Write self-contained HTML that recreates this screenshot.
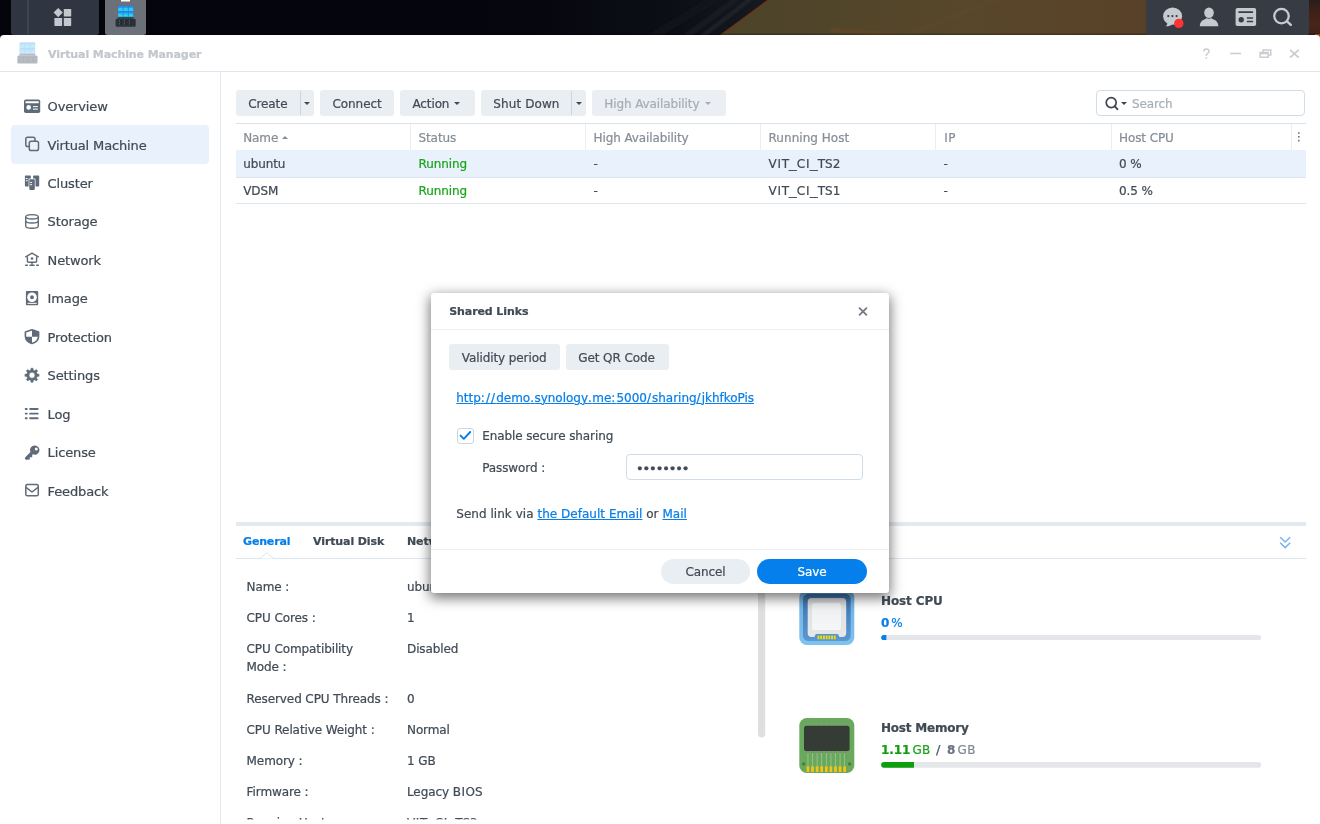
<!DOCTYPE html>
<html lang="en">
<head>
<meta charset="utf-8">
<title>Virtual Machine Manager</title>
<style>
*{box-sizing:border-box;margin:0;padding:0}
html,body{width:1320px;height:824px;overflow:hidden}
body{font-family:"DejaVu Sans","Liberation Sans",sans-serif;font-size:12px;color:#414b55;background:#fff;position:relative;letter-spacing:-0.1px}
#root{position:absolute;left:0;top:0;width:1320px;height:824px;overflow:hidden;will-change:transform}
.a{position:absolute}
.t{position:absolute;white-space:nowrap;line-height:16px;font-size:12px;-webkit-text-stroke:0.22px currentColor}
.b{font-weight:bold}
svg{position:absolute;overflow:visible}
#wall{left:0;top:0;width:1320px;height:40px;background:#080912;overflow:hidden}
#win{left:0;top:35px;width:1320px;height:789px;background:#fff;border-radius:4px 4px 0 0}
.tb{background:#e9eef3;border-radius:3px;height:26px;top:90px}
.tb .t{top:5px;color:#414b55}
.car{width:0;height:0;border-left:3px solid transparent;border-right:3px solid transparent;border-top:3px solid #414b55}
.hl{height:1px;background:#dde5ee}
.vl{width:1px;background:#eaeef3}
.th{color:#868e97}
.grn{color:#1aa51a}
.lnk{color:#057feb;text-decoration:underline;text-underline-offset:0.7px;text-decoration-thickness:1px}
.nav{color:#414b55;font-size:13px;letter-spacing:-0.14px}
.lab{color:#414b55}
.p{letter-spacing:1.1px}
.wi{padding:0 0.7px}
.wu{display:inline-block;width:7.5px;transform:scaleX(1.28);transform-origin:0 50%}
.q{letter-spacing:0.5px}
</style>
</head>
<body>
<div id="root">
<div class="a" id="wall">
<svg width="1320" height="40" viewBox="0 0 1320 40" style="left:0;top:0">
<defs>
<linearGradient id="wg" gradientUnits="userSpaceOnUse" x1="720" y1="0" x2="1320" y2="0">
<stop offset="0" stop-color="#4c4329"/><stop offset="0.2" stop-color="#51452a"/><stop offset="0.4" stop-color="#58472a"/><stop offset="0.6" stop-color="#5a4429"/><stop offset="0.72" stop-color="#574028"/><stop offset="1" stop-color="#4a2e1f"/>
</linearGradient>
<linearGradient id="wd" gradientUnits="userSpaceOnUse" x1="0" y1="0" x2="770" y2="0">
<stop offset="0" stop-color="#04050b"/><stop offset="0.7" stop-color="#06070e"/><stop offset="0.88" stop-color="#0d0f17"/><stop offset="1" stop-color="#171a21"/>
</linearGradient>
<filter id="wb" x="-20%" y="-50%" width="140%" height="200%"><feGaussianBlur stdDeviation="1.2"/></filter>
</defs>
<rect x="0" y="0" width="1320" height="40" fill="url(#wd)"/>
<g filter="url(#wb)" opacity="0.6">
<path d="M752,-2 L700,38" stroke="#2a2e32" stroke-width="4" fill="none"/>
<path d="M738,-2 L684,38" stroke="#1c2026" stroke-width="6" fill="none"/>
<path d="M716,-2 L650,38" stroke="#14171e" stroke-width="8" fill="none"/>
</g>
<polygon points="768,0 1320,0 1320,40 713,40" fill="url(#wg)"/>
<path d="M768.5,-0.5 L713.5,40.5" stroke="#7d2c14" stroke-width="1.1" fill="none" opacity="0.85"/>
<g filter="url(#wb)" opacity="0.5">
<path d="M1000,-2 L900,38" stroke="#5d4a2c" stroke-width="6" fill="none"/>
<path d="M830,30 L900,36" stroke="#6a4a26" stroke-width="5" fill="none"/>
</g>
<linearGradient id="wr" x1="0" y1="0" x2="0" y2="1"><stop offset="0" stop-color="#2a1d1e"/><stop offset="0.3" stop-color="#3e2119"/><stop offset="0.6" stop-color="#4a2419"/><stop offset="0.85" stop-color="#40211a"/><stop offset="1" stop-color="#3a1d15"/></linearGradient><polygon points="1308,0 1320,0 1320,40 1308,40" fill="url(#wr)"/><rect x="1315" y="34" width="5" height="6" fill="#c45a2c"/>
<rect x="0" y="33.5" width="1320" height="2" fill="#000" opacity="0.25"/>
</svg>
</div>
<div class="a" style="left:11px;top:0;width:88px;height:34.5px;background:#2f3641;border-radius:0 0 2.5px 2.5px"></div>
<div class="a" style="left:27px;top:0;width:2px;height:34px;background:#3e4550"></div>
<svg width="20" height="20" viewBox="0 0 20 20" style="left:53px;top:7px">
<rect x="10.8" y="1.9" width="7.4" height="7.6" rx="0.6" fill="#c3c8cf"/>
<rect x="1.4" y="11" width="7.7" height="7.9" rx="0.6" fill="#c3c8cf"/>
<rect x="10.8" y="11" width="7.4" height="7.9" rx="0.6" fill="#c3c8cf"/>
<polygon points="5.2,0.9 9.8,5.6 5.2,10.3 0.6,5.6" fill="#c3c8cf"/>
</svg>
<div class="a" style="left:105px;top:0;width:41.3px;height:34.5px;background:#6c7078;border-radius:0 0 2.5px 2.5px"></div>
<div class="a" style="left:121px;top:0;width:9px;height:1px;background:#fff"></div><div class="a" style="left:121px;top:1px;width:9px;height:1px;background:rgba(255,255,255,0.5)"></div>
<svg width="21" height="21" viewBox="0 0 21 21" style="left:115px;top:5px"><g transform="translate(0.4,0.9)">
<defs><linearGradient id="vgn" x1="0" y1="0" x2="0" y2="1"><stop offset="0" stop-color="#2385f2"/><stop offset="1" stop-color="#16d8ea"/></linearGradient></defs>
<rect x="2.5" y="0" width="15.4" height="11.2" fill="#2b66cf"/>
<rect x="2.60" y="0.00" width="4.9" height="5.3" fill="url(#vgn)"/><rect x="3.20" y="2.20" width="3.7" height="0.7" fill="#7fe9f5" opacity="0.55"/><rect x="3.20" y="3.70" width="3.7" height="0.7" fill="#7fe9f5" opacity="0.55"/><rect x="7.80" y="0.00" width="4.9" height="5.3" fill="url(#vgn)"/><rect x="8.40" y="2.20" width="3.7" height="0.7" fill="#7fe9f5" opacity="0.55"/><rect x="8.40" y="3.70" width="3.7" height="0.7" fill="#7fe9f5" opacity="0.55"/><rect x="13.00" y="0.00" width="4.9" height="5.3" fill="url(#vgn)"/><rect x="13.60" y="2.20" width="3.7" height="0.7" fill="#7fe9f5" opacity="0.55"/><rect x="13.60" y="3.70" width="3.7" height="0.7" fill="#7fe9f5" opacity="0.55"/><rect x="2.60" y="5.60" width="4.9" height="5.3" fill="url(#vgn)"/><rect x="3.20" y="7.80" width="3.7" height="0.7" fill="#7fe9f5" opacity="0.55"/><rect x="3.20" y="9.30" width="3.7" height="0.7" fill="#7fe9f5" opacity="0.55"/><rect x="7.80" y="5.60" width="4.9" height="5.3" fill="url(#vgn)"/><rect x="8.40" y="7.80" width="3.7" height="0.7" fill="#7fe9f5" opacity="0.55"/><rect x="8.40" y="9.30" width="3.7" height="0.7" fill="#7fe9f5" opacity="0.55"/><rect x="13.00" y="5.60" width="4.9" height="5.3" fill="url(#vgn)"/><rect x="13.60" y="7.80" width="3.7" height="0.7" fill="#7fe9f5" opacity="0.55"/><rect x="13.60" y="9.30" width="3.7" height="0.7" fill="#7fe9f5" opacity="0.55"/>
<rect x="2.3" y="11.1" width="15.8" height="1.9" fill="#3b404d"/>
<path d="M1.2,12.8 H19.2 L20.3,13.6 V19.8 Q20.3,20.8 19.3,20.8 H1.2 Q0.2,20.8 0.2,19.8 V13.6 Z" fill="#2a2f3b"/>
<rect x="2.90" y="14.00" width="4.4" height="2.2" rx="0.5" fill="#1c2029" stroke="#474d5a" stroke-width="0.4"/><rect x="3.60" y="14.60" width="0.9" height="0.9" fill="#55cf3c" opacity="0.85"/><rect x="7.90" y="14.00" width="4.4" height="2.2" rx="0.5" fill="#1c2029" stroke="#474d5a" stroke-width="0.4"/><rect x="8.60" y="14.60" width="0.9" height="0.9" fill="#55cf3c" opacity="0.85"/><rect x="12.90" y="14.00" width="4.4" height="2.2" rx="0.5" fill="#1c2029" stroke="#474d5a" stroke-width="0.4"/><rect x="13.60" y="14.60" width="0.9" height="0.9" fill="#55cf3c" opacity="0.85"/><rect x="2.90" y="16.90" width="4.4" height="2.2" rx="0.5" fill="#1c2029" stroke="#474d5a" stroke-width="0.4"/><rect x="3.60" y="17.50" width="0.9" height="0.9" fill="#55cf3c" opacity="0.85"/><rect x="7.90" y="16.90" width="4.4" height="2.2" rx="0.5" fill="#1c2029" stroke="#474d5a" stroke-width="0.4"/><rect x="8.60" y="17.50" width="0.9" height="0.9" fill="#55cf3c" opacity="0.85"/><rect x="12.90" y="16.90" width="4.4" height="2.2" rx="0.5" fill="#1c2029" stroke="#474d5a" stroke-width="0.4"/><rect x="13.60" y="17.50" width="0.9" height="0.9" fill="#55cf3c" opacity="0.85"/>
</g></svg>
<div class="a" style="left:1146px;top:0;width:163px;height:34.5px;background:#373c44;border-radius:0 0 2.5px 2.5px"></div>
<svg width="24" height="22" viewBox="0 0 24 22" style="left:1162px;top:6px">
<ellipse cx="10.6" cy="10.2" rx="9.5" ry="8.6" fill="#c5cad0"/>
<path d="M5.2,15.5 C5.6,17.8 5.0,19.4 3.6,20.3 C6.4,20.6 8.6,19.8 10,18.2 Z" fill="#c5cad0"/>
<circle cx="6.3" cy="10.1" r="1.15" fill="#383d46"/><circle cx="10.4" cy="10.1" r="1.15" fill="#383d46"/><circle cx="14.6" cy="10.1" r="1.15" fill="#383d46"/>
<circle cx="16.8" cy="17.4" r="4.7" fill="#ff3333"/>
</svg>
<svg width="20" height="20" viewBox="0 0 20 20" style="left:1199px;top:7px">
<ellipse cx="10" cy="5.8" rx="4.8" ry="5.3" fill="#c5cad0"/>
<path d="M0.8,19.2 C0.8,16 2,13.6 5.4,12.4 C6.6,11.9 7.4,11.6 7.6,11 C8.6,12 11.4,12 12.4,11 C12.6,11.6 13.4,11.9 14.6,12.4 C18,13.6 19.3,16 19.3,19.2 Z" fill="#c5cad0"/>
</svg>
<svg width="22" height="20" viewBox="0 0 22 20" style="left:1235px;top:7px">
<rect x="0.6" y="0.9" width="20.5" height="18.2" rx="1.8" fill="#c5cad0"/>
<rect x="3.3" y="4.2" width="14.8" height="1.8" rx="0.5" fill="#383d46"/>
<circle cx="6.2" cy="12.7" r="2.7" fill="#383d46"/>
<rect x="11.8" y="10.2" width="6.3" height="1.5" rx="0.5" fill="#383d46"/>
<rect x="11.8" y="13.8" width="6.3" height="1.5" rx="0.5" fill="#383d46"/>
</svg>
<svg width="22" height="22" viewBox="0 0 22 22" style="left:1272px;top:6px">
<circle cx="9.5" cy="10.1" r="7.25" fill="none" stroke="#c5cad0" stroke-width="2.3"/>
<path d="M15,15.4 L18.8,18.9" stroke="#c5cad0" stroke-width="2.5" stroke-linecap="round"/>
</svg>
<div class="a" id="win"></div>
<svg width="21" height="21" viewBox="0 0 21 21" style="left:17px;top:42px"><g transform="translate(0.2,0.6)">
<defs><linearGradient id="vgf" x1="0" y1="0" x2="0" y2="1"><stop offset="0" stop-color="#bcdcfb"/><stop offset="1" stop-color="#bdf0f7"/></linearGradient></defs>
<rect x="2.5" y="0" width="15.4" height="11.2" fill="#c3d3f6"/>
<rect x="2.60" y="0.00" width="4.9" height="5.3" fill="url(#vgf)"/><rect x="3.20" y="2.20" width="3.7" height="0.7" fill="#dff3fd" opacity="0.55"/><rect x="3.20" y="3.70" width="3.7" height="0.7" fill="#dff3fd" opacity="0.55"/><rect x="7.80" y="0.00" width="4.9" height="5.3" fill="url(#vgf)"/><rect x="8.40" y="2.20" width="3.7" height="0.7" fill="#dff3fd" opacity="0.55"/><rect x="8.40" y="3.70" width="3.7" height="0.7" fill="#dff3fd" opacity="0.55"/><rect x="13.00" y="0.00" width="4.9" height="5.3" fill="url(#vgf)"/><rect x="13.60" y="2.20" width="3.7" height="0.7" fill="#dff3fd" opacity="0.55"/><rect x="13.60" y="3.70" width="3.7" height="0.7" fill="#dff3fd" opacity="0.55"/><rect x="2.60" y="5.60" width="4.9" height="5.3" fill="url(#vgf)"/><rect x="3.20" y="7.80" width="3.7" height="0.7" fill="#dff3fd" opacity="0.55"/><rect x="3.20" y="9.30" width="3.7" height="0.7" fill="#dff3fd" opacity="0.55"/><rect x="7.80" y="5.60" width="4.9" height="5.3" fill="url(#vgf)"/><rect x="8.40" y="7.80" width="3.7" height="0.7" fill="#dff3fd" opacity="0.55"/><rect x="8.40" y="9.30" width="3.7" height="0.7" fill="#dff3fd" opacity="0.55"/><rect x="13.00" y="5.60" width="4.9" height="5.3" fill="url(#vgf)"/><rect x="13.60" y="7.80" width="3.7" height="0.7" fill="#dff3fd" opacity="0.55"/><rect x="13.60" y="9.30" width="3.7" height="0.7" fill="#dff3fd" opacity="0.55"/>
<rect x="2.3" y="11.1" width="15.8" height="1.9" fill="#b9bcc4"/>
<path d="M1.2,12.8 H19.2 L20.3,13.6 V19.8 Q20.3,20.8 19.3,20.8 H1.2 Q0.2,20.8 0.2,19.8 V13.6 Z" fill="#b4b8c0"/>
<rect x="2.90" y="14.00" width="4.4" height="2.2" rx="0.5" fill="#adb1b9" stroke="#c3c6cc" stroke-width="0.4"/><rect x="3.60" y="14.60" width="0.9" height="0.9" fill="#b7e6a3" opacity="0.85"/><rect x="7.90" y="14.00" width="4.4" height="2.2" rx="0.5" fill="#adb1b9" stroke="#c3c6cc" stroke-width="0.4"/><rect x="8.60" y="14.60" width="0.9" height="0.9" fill="#b7e6a3" opacity="0.85"/><rect x="12.90" y="14.00" width="4.4" height="2.2" rx="0.5" fill="#adb1b9" stroke="#c3c6cc" stroke-width="0.4"/><rect x="13.60" y="14.60" width="0.9" height="0.9" fill="#b7e6a3" opacity="0.85"/><rect x="2.90" y="16.90" width="4.4" height="2.2" rx="0.5" fill="#adb1b9" stroke="#c3c6cc" stroke-width="0.4"/><rect x="3.60" y="17.50" width="0.9" height="0.9" fill="#b7e6a3" opacity="0.85"/><rect x="7.90" y="16.90" width="4.4" height="2.2" rx="0.5" fill="#adb1b9" stroke="#c3c6cc" stroke-width="0.4"/><rect x="8.60" y="17.50" width="0.9" height="0.9" fill="#b7e6a3" opacity="0.85"/><rect x="12.90" y="16.90" width="4.4" height="2.2" rx="0.5" fill="#adb1b9" stroke="#c3c6cc" stroke-width="0.4"/><rect x="13.60" y="17.50" width="0.9" height="0.9" fill="#b7e6a3" opacity="0.85"/>
</g></svg>
<div class="t b" style="left:48px;top:47px;line-height:15px;font-size:11px;color:#c3c7cc;letter-spacing:-0.1px">Virtual Machine Manager</div>
<div class="a hl" style="left:0;top:71px;width:1320px;background:#dfe6ee"></div>
<svg width="100" height="14" viewBox="0 0 100 14" style="left:1200px;top:47px">
<g fill="none" stroke="#c9cdd1" stroke-width="1.5">
<path d="M3.7,4.6 C3.7,2.8 4.9,1.9 6.4,1.9 C8,1.9 9.0,2.9 9.0,4.2 C9.0,5.4 8.3,6 7.4,6.7 C6.6,7.3 6.3,7.8 6.3,9"/>
<path d="M30.2,6.5 H41" stroke-width="1.6"/>
<path d="M60.2,5.6 H68.2 V10.3 H60.2 Z"/>
<path d="M60.2,6.4 H68.2" stroke-width="1.8"/>
<path d="M63,5 V3 H70.8 V7.9 H68.8"/>
<path d="M90.1,2.9 L98.7,10.6 M98.7,2.9 L90.1,10.6" stroke-width="1.8"/>
</g>
<rect x="5.5" y="10.3" width="1.6" height="1.6" fill="#c9cdd1"/>
</svg>
<div class="a vl" style="left:220px;top:72px;height:752px;background:#e2e7ef"></div>
<div class="a" style="left:11px;top:125px;width:198px;height:38.5px;border-radius:4px;background:#e9f1fd"></div>
<svg width="16" height="16" viewBox="0 0 16 16" style="left:24px;top:98px"><g transform="translate(0.0,0.1)"><rect x="0" y="1.3" width="16.2" height="13.6" rx="1.8" fill="#5f6b78"/>
<rect x="1.5" y="3.2" width="13.2" height="1.9" rx="0.3" fill="#fff"/>
<circle cx="4.7" cy="9.3" r="2.3" fill="#fff"/>
<rect x="9" y="8" width="4.8" height="1" fill="#fff"/>
<rect x="9" y="10.3" width="4.8" height="1.5" fill="#d0d4d9"/></g></svg>
<div class="t nav" style="left:47.6px;top:98px;line-height:17px;font-size:13px;">Overview</div>
<svg width="16" height="16" viewBox="0 0 16 16" style="left:24px;top:136px"><g transform="translate(0.0,0.55)"><rect x="1.8" y="0.8" width="9.2" height="9.2" rx="1.8" fill="none" stroke="#5f6b78" stroke-width="1.5"/>
<rect x="5.3" y="4.6" width="9.2" height="9.4" rx="1.8" fill="#e9f1fd" stroke="#5f6b78" stroke-width="1.5"/></g></svg>
<div class="t nav" style="left:47.6px;top:137px;line-height:17px;font-size:13px;">Virtual Machine</div>
<svg width="16" height="16" viewBox="0 0 16 16" style="left:24px;top:175px"><rect x="0.9" y="0.6" width="5.9" height="10.9" rx="0.8" fill="#5f6b78"/>
<rect x="9.1" y="0.6" width="6.1" height="10.9" rx="0.8" fill="#5f6b78"/>
<rect x="4.6" y="3.5" width="6.9" height="12" rx="1.2" fill="#fff"/>
<rect x="5.3" y="4.2" width="5.5" height="10.7" rx="0.8" fill="#5f6b78"/>
<rect x="1.8" y="3" width="1.8" height="1" fill="#fff"/><rect x="1.8" y="5.2" width="1.8" height="1" fill="#fff"/>
<rect x="6.2" y="7" width="1.9" height="1" fill="#fff"/><rect x="6.2" y="9.2" width="1.9" height="1" fill="#fff"/></svg>
<div class="t nav" style="left:47.6px;top:175px;line-height:17px;font-size:13px;">Cluster</div>
<svg width="16" height="16" viewBox="0 0 16 16" style="left:24px;top:213px"><g transform="translate(0.0,0.45)"><g fill="none" stroke="#5f6b78" stroke-width="1.4">
<ellipse cx="8" cy="3.4" rx="6.3" ry="2.2"/>
<path d="M1.7,3.4 V12.6 C1.7,13.9 4.5,14.8 8,14.8 C11.5,14.8 14.3,13.9 14.3,12.6 V3.4"/>
<path d="M1.7,7.6 C1.7,8.8 4.5,9.6 8,9.6 C11.5,9.6 14.3,8.8 14.3,7.6"/>
</g></g></svg>
<div class="t nav" style="left:47.6px;top:213px;line-height:17px;font-size:13px;">Storage</div>
<svg width="16" height="16" viewBox="0 0 16 16" style="left:24px;top:251px"><g transform="translate(0.0,0.9)"><g fill="none" stroke="#5f6b78" stroke-width="1.4" stroke-linejoin="round">
<path d="M1.2,5.3 L8,1.2 L14.8,5.3"/>
<path d="M3.4,4.6 V9.4 Q3.4,10.4 4.4,10.4 H11.6 Q12.6,10.4 12.6,9.4 V4.6"/>
</g>
<circle cx="8" cy="6.6" r="1.3" fill="#5f6b78"/>
<rect x="7.3" y="10.4" width="1.4" height="2.6" fill="#5f6b78"/>
<rect x="5.4" y="12.6" width="5.3" height="1.6" rx="0.6" fill="#5f6b78"/>
<rect x="1" y="12.7" width="3" height="1.3" rx="0.4" fill="#5f6b78"/>
<rect x="12" y="12.7" width="3" height="1.3" rx="0.4" fill="#5f6b78"/></g></svg>
<div class="t nav" style="left:47.6px;top:252px;line-height:17px;font-size:13px;">Network</div>
<svg width="16" height="16" viewBox="0 0 16 16" style="left:24px;top:290px"><g transform="translate(0.0,0.35)"><rect x="1.9" y="0.6" width="12.3" height="14.4" rx="1" fill="#5f6b78"/>
<circle cx="8" cy="6.9" r="4.8" fill="#fff"/>
<circle cx="8" cy="6.9" r="1.9" fill="#5f6b78"/>
<rect x="3.5" y="12.5" width="9.2" height="1" fill="#fff"/></g></svg>
<div class="t nav" style="left:47.6px;top:290px;line-height:17px;font-size:13px;">Image</div>
<svg width="16" height="16" viewBox="0 0 16 16" style="left:24px;top:328px"><g transform="translate(0.0,0.8)"><path d="M8,1 L14.6,3.2 V7.2 C14.6,11 11.6,13.7 8,14.8 C4.4,13.7 1.4,11 1.4,7.2 V3.2 Z" fill="#fff" stroke="#5f6b78" stroke-width="1.6" stroke-linejoin="round"/>
<path d="M8,1 L14.6,3.2 V7.9 H8 Z" fill="#5f6b78"/>
<path d="M8,7.9 V14.8 C4.4,13.7 1.6,11 1.4,7.9 Z" fill="#5f6b78"/></g></svg>
<div class="t nav" style="left:47.6px;top:329px;line-height:17px;font-size:13px;">Protection</div>
<svg width="16" height="16" viewBox="0 0 16 16" style="left:24px;top:367px"><g transform="translate(0.0,0.25)"><path d="M6.84,2.83 L6.93,0.93 L9.07,0.93 L9.16,2.83 L10.84,3.52 L12.24,2.25 L13.75,3.76 L12.48,5.16 L13.17,6.84 L15.07,6.93 L15.07,9.07 L13.17,9.16 L12.48,10.84 L13.75,12.24 L12.24,13.75 L10.84,12.48 L9.16,13.17 L9.07,15.07 L6.93,15.07 L6.84,13.17 L5.16,12.48 L3.76,13.75 L2.25,12.24 L3.52,10.84 L2.83,9.16 L0.93,9.07 L0.93,6.93 L2.83,6.84 L3.52,5.16 L2.25,3.76 L3.76,2.25 L5.16,3.52 Z M10.95,8.00 A2.95,2.95 0 1,0 5.05,8.00 A2.95,2.95 0 1,0 10.95,8.00 Z" fill="#5f6b78" fill-rule="evenodd" stroke="#5f6b78" stroke-width="0.5" stroke-linejoin="round"/></g></svg>
<div class="t nav" style="left:47.6px;top:367px;line-height:17px;font-size:13px;">Settings</div>
<svg width="16" height="16" viewBox="0 0 16 16" style="left:24px;top:405px"><g transform="translate(0.0,0.7)"><g fill="#5f6b78">
<rect x="0.8" y="2.35" width="2.8" height="1.9" rx="0.7"/><rect x="5.2" y="2.35" width="9.4" height="1.9" rx="0.9"/>
<rect x="0.8" y="6.95" width="2.8" height="1.9" rx="0.7"/><rect x="5.2" y="6.95" width="9.4" height="1.9" rx="0.9"/>
<rect x="0.8" y="11.55" width="2.8" height="1.9" rx="0.7"/><rect x="5.2" y="11.55" width="9.4" height="1.9" rx="0.9"/>
</g></g></svg>
<div class="t nav" style="left:47.6px;top:406px;line-height:17px;font-size:13px;">Log</div>
<svg width="16" height="16" viewBox="0 0 16 16" style="left:24px;top:444px"><g transform="translate(0.0,0.15)"><path transform="translate(0,0.9)" d="M10.9,0.4 A4.6,4.6 0 1,1 9.0,9.2 L8.2,10 L8.2,12.2 L5.8,12.2 L5.8,14.4 L2.4,14.8 Q0.9,14.8 0.9,13.4 Q0.9,12.5 1.5,11.9 L6.5,7.0 A4.6,4.6 0 0,1 10.9,0.4 Z M12.3,2.4 A1.5,1.5 0 1,0 12.3,5.4 A1.5,1.5 0 1,0 12.3,2.4 Z" fill="#5f6b78" fill-rule="evenodd"/></g></svg>
<div class="t nav" style="left:47.6px;top:444px;line-height:17px;font-size:13px;">License</div>
<svg width="16" height="16" viewBox="0 0 16 16" style="left:24px;top:482px"><g transform="translate(0.0,0.6)"><g fill="none" stroke="#5f6b78" stroke-width="1.5" stroke-linejoin="round">
<rect x="1.8" y="2" width="12.5" height="11.2" rx="1.6"/>
<path d="M2,4.8 L8,9.4 L14,4.8"/>
</g></g></svg>
<div class="t nav" style="left:47.6px;top:483px;line-height:17px;font-size:13px;">Feedback</div>
<div class="a tb" style="left:236px;width:78px;background:#e9eef3"><div class="t" style="left:12.199999999999989px;top:6px;color:#414b55">Create</div><div class="a" style="left:64px;top:1px;width:1px;height:24px;background:#cdd4dc"></div><div class="a car" style="left:68px;top:11.5px;border-top-color:#414b55"></div></div>
<div class="a tb" style="left:320px;width:74px;background:#e9eef3"><div class="t" style="left:12.600000000000023px;top:6px;color:#414b55">Connect</div></div>
<div class="a tb" style="left:400px;width:75px;background:#e9eef3"><div class="t" style="left:12.399999999999977px;top:6px;color:#414b55">Action</div><div class="a car" style="left:54px;top:11.5px;border-top-color:#414b55"></div></div>
<div class="a tb" style="left:481px;width:105px;background:#e9eef3"><div class="t" style="left:12.300000000000011px;top:6px;color:#414b55"><span style="letter-spacing:0.1px">Shut Down</span></div><div class="a" style="left:90px;top:1px;width:1px;height:24px;background:#cdd4dc"></div><div class="a car" style="left:94.70000000000005px;top:11.5px;border-top-color:#414b55"></div></div>
<div class="a tb" style="left:592px;width:134px;background:#ebeff3"><div class="t" style="left:12.299999999999955px;top:6px;color:#a6adb5">High Availability</div><div class="a car" style="left:112.5px;top:11.5px;border-top-color:#a6adb5"></div></div>
<div class="a" style="left:1096px;top:90px;width:209px;height:26px;border:1px solid #cfdcea;border-radius:4px;background:#fff"></div>
<svg width="16" height="16" viewBox="0 0 16 16" style="left:1104px;top:95px">
<circle cx="7.2" cy="7.6" r="5" fill="none" stroke="#3d4650" stroke-width="1.7"/>
<path d="M10.8,11.3 L13.4,14.2" stroke="#3d4650" stroke-width="1.9" stroke-linecap="round"/>
</svg>
<div class="a car" style="left:1121px;top:101.5px;border-top-color:#3d4650"></div>
<div class="t " style="left:1132px;top:96px;line-height:16px;color:#a7aeb6">Search</div>
<div class="a hl" style="left:236px;top:123px;width:1070px;background:#d9e3ee"></div>
<div class="a" style="left:236px;top:150px;width:1070px;height:27px;background:#e9f1fc"></div>
<div class="a hl" style="left:236px;top:176.5px;width:1070px;background:#dbe4ef"></div>
<div class="a hl" style="left:236px;top:203px;width:1070px;background:#dfe6ee"></div>
<div class="t th" style="left:243.2px;top:130px;line-height:16px;">Name</div>
<div class="t th" style="left:418.5px;top:130px;line-height:16px;">Status</div>
<div class="a vl" style="left:410px;top:124px;height:26px"></div>
<div class="t th" style="left:593.5px;top:130px;line-height:16px;">High Availability</div>
<div class="a vl" style="left:585px;top:124px;height:26px"></div>
<div class="t th" style="left:768.5px;top:130px;line-height:16px;letter-spacing:0.04px">Running Host</div>
<div class="a vl" style="left:760px;top:124px;height:26px"></div>
<div class="t th" style="left:943.5px;top:130px;line-height:16px;"><span class="wi">I</span>P</div>
<div class="a vl" style="left:935px;top:124px;height:26px"></div>
<div class="t th" style="left:1119.0px;top:130px;line-height:16px;">Host CPU</div>
<div class="a vl" style="left:1111px;top:124px;height:26px"></div>
<div class="a vl" style="left:1291px;top:124px;height:26px"></div>
<div class="a" style="left:282px;top:135.5px;width:0;height:0;border-left:3px solid transparent;border-right:3px solid transparent;border-bottom:3px solid #868e97"></div>
<svg width="4" height="12" viewBox="0 0 4 12" style="left:1297px;top:131px"><g fill="#6b7580"><rect x="1" y="1.2" width="1.6" height="1.6"/><rect x="1" y="5" width="1.6" height="1.6"/><rect x="1" y="8.8" width="1.6" height="1.6"/></g></svg>
<div class="t lab" style="left:243.2px;top:156px;line-height:16px;">ubuntu</div>
<div class="t grn" style="left:418.5px;top:156px;line-height:16px;">Running</div>
<div class="t lab" style="left:593.5px;top:156px;line-height:16px;">-</div>
<div class="t lab" style="left:768.5px;top:156px;line-height:16px;letter-spacing:0.08px">V<span class="wi">I</span>T<span class="wu">_</span>C<span class="wi">I</span><span class="wu">_</span>TS2</div>
<div class="t lab" style="left:943.5px;top:156px;line-height:16px;">-</div>
<div class="t lab" style="left:1119.0px;top:156px;line-height:16px;">0 %</div>
<div class="t lab" style="left:243.2px;top:183px;line-height:16px;">VDSM</div>
<div class="t grn" style="left:418.5px;top:183px;line-height:16px;">Running</div>
<div class="t lab" style="left:593.5px;top:183px;line-height:16px;">-</div>
<div class="t lab" style="left:768.5px;top:183px;line-height:16px;letter-spacing:0.08px">V<span class="wi">I</span>T<span class="wu">_</span>C<span class="wi">I</span><span class="wu">_</span>TS1</div>
<div class="t lab" style="left:943.5px;top:183px;line-height:16px;">-</div>
<div class="t lab" style="left:1119.0px;top:183px;line-height:16px;">0.5 %</div>
<div class="a" style="left:236px;top:522px;width:1070px;height:4px;background:linear-gradient(#e6ebf2,#e0e7ef 70%,#e6ebf2)"></div>
<div class="a hl" style="left:236px;top:558px;width:1070px;background:#dde5ee"></div>
<svg width="14" height="7" viewBox="0 0 14 7" style="left:259px;top:552px"><g transform="translate(0.7,0.0)"><path d="M0,6.5 L7,0.5 L14,6.5 Z" fill="#fff"/><path d="M0,6.5 L7,0.8 L14,6.5" fill="none" stroke="#dde5ee" stroke-width="1"/></g></svg>
<div class="t b" style="left:243px;top:534px;line-height:15px;font-size:11px;color:#057feb;letter-spacing:-0.15px">General</div>
<div class="t b" style="left:313px;top:534px;line-height:15px;font-size:11px;letter-spacing:-0.1px">Virtual Disk</div>
<div class="t b" style="left:407px;top:534px;line-height:15px;font-size:11px;letter-spacing:-0.1px">Network</div>
<svg width="14" height="14" viewBox="0 0 14 14" style="left:1278px;top:535px"><g fill="none" stroke="#79b1f2" stroke-width="1.5" stroke-linejoin="miter"><path d="M2.2,2.2 L7.2,7 L12.2,2.2"/><path d="M2.2,7.8 L7.2,12.6 L12.2,7.8"/></g></svg>
<div class="t lab" style="left:246.6px;top:579px;line-height:16px;">Name :</div>
<div class="t lab" style="left:407px;top:579px;line-height:16px;">ubuntu</div>
<div class="t lab" style="left:246.6px;top:610px;line-height:16px;">CPU Cores :</div>
<div class="t lab" style="left:407px;top:610px;line-height:16px;">1</div>
<div class="t lab" style="left:246.6px;top:641px;line-height:16px;">CPU Compatibility</div>
<div class="t lab" style="left:407px;top:641px;line-height:16px;">Disabled</div>
<div class="t lab" style="left:246.6px;top:659px;line-height:16px;">Mode :</div>
<div class="t lab" style="left:246.6px;top:691px;line-height:16px;">Reserved CPU Threads :</div>
<div class="t lab" style="left:407px;top:691px;line-height:16px;">0</div>
<div class="t lab" style="left:246.6px;top:722px;line-height:16px;">CPU Relative Weight :</div>
<div class="t lab" style="left:407px;top:722px;line-height:16px;">Normal</div>
<div class="t lab" style="left:246.6px;top:753px;line-height:16px;">Memory :</div>
<div class="t lab" style="left:407px;top:753px;line-height:16px;">1 GB</div>
<div class="t lab" style="left:246.6px;top:784px;line-height:16px;">Firmware :</div>
<div class="t lab" style="left:407px;top:784px;line-height:16px;">Legacy B<span class="wi">I</span>OS</div>
<div class="t lab" style="left:246.6px;top:815px;line-height:16px;">Running Host :</div>
<div class="t lab" style="left:407px;top:815px;line-height:16px;">V<span class="wi">I</span>T<span class="wu">_</span>C<span class="wi">I</span><span class="wu">_</span>TS2</div>
<div class="a" style="left:236px;top:819px;width:521px;height:1px;background:rgba(255,255,255,0.5)"></div><div class="a" style="left:236px;top:820px;width:521px;height:4px;background:#fff"></div>
<svg width="8" height="172" viewBox="0 0 8 172" style="left:758px;top:566px"><rect x="0" y="0" width="7.2" height="171.4" rx="3.6" fill="#dfdfdf"/></svg>
<svg width="55" height="55" viewBox="0 0 55 55" style="left:799px;top:590px"><g transform="translate(0.3,0.0)">
<defs><linearGradient id="cg" x1="0" y1="0" x2="0" y2="1"><stop offset="0" stop-color="#6fb0e2"/><stop offset="1" stop-color="#7ec2ef"/></linearGradient>
<linearGradient id="cg2" x1="0" y1="0" x2="0" y2="1"><stop offset="0" stop-color="#3d6ea6"/><stop offset="0.5" stop-color="#4d86c0"/><stop offset="1" stop-color="#5a98d2"/></linearGradient>
<linearGradient id="cg3" x1="0" y1="0" x2="0" y2="1"><stop offset="0" stop-color="#d0d1d3"/><stop offset="0.3" stop-color="#e2e3e5"/><stop offset="1" stop-color="#e6e7e9"/></linearGradient>
<linearGradient id="cg4" x1="0" y1="0" x2="0" y2="1"><stop offset="0" stop-color="#eeeff1"/><stop offset="1" stop-color="#f6f7f8"/></linearGradient></defs>
<rect x="0" y="0" width="55" height="55" rx="7.5" fill="url(#cg)"/>
<rect x="3.7" y="3.8" width="47.7" height="47.3" rx="5.5" fill="url(#cg2)"/>
<path d="M12.4,8 H42.9 Q46.9,8 46.9,12 V43 Q46.9,46.9 43,46.9 H40.6 Q39.4,46.9 39.4,45.6 Q39.4,44.1 38,44.1 H17.2 Q15.8,44.1 15.8,45.6 Q15.8,46.9 14.6,46.9 H12.4 Q8.4,46.9 8.4,43 V12 Q8.4,8 12.4,8 Z" fill="url(#cg3)"/>
<rect x="12.3" y="12.8" width="29.8" height="28.2" rx="3.6" fill="#d4d5d7"/>
<rect x="12.5" y="13" width="29.4" height="27.6" rx="3.4" fill="url(#cg4)"/>
<rect x="18.20" y="45.4" width="1.9" height="3.9" rx="0.3" fill="#f6dc05"/><rect x="20.92" y="45.4" width="1.9" height="3.9" rx="0.3" fill="#f6dc05"/><rect x="23.64" y="45.4" width="1.9" height="3.9" rx="0.3" fill="#f6dc05"/><rect x="26.36" y="45.4" width="1.9" height="3.9" rx="0.3" fill="#f6dc05"/><rect x="29.08" y="45.4" width="1.9" height="3.9" rx="0.3" fill="#f6dc05"/><rect x="31.80" y="45.4" width="1.9" height="3.9" rx="0.3" fill="#f6dc05"/><rect x="34.52" y="45.4" width="1.9" height="3.9" rx="0.3" fill="#f6dc05"/>
</g></svg>
<div class="t b" style="left:881px;top:593px;line-height:16px;letter-spacing:-0.12px">Host CPU</div>
<div class="t " style="left:881px;top:615px;line-height:16px;color:#057feb"><span class="b">0</span><span style="margin-left:2px">%</span></div>
<svg width="381" height="6" viewBox="0 0 381 6" style="left:881px;top:634px"><g transform="translate(0.0,0.9)"><rect x="0.2" y="0" width="380" height="5.2" rx="2.6" fill="#e4e6e9"/><path d="M2.8,0 H5.4 V5.2 H2.8 A2.6,2.6 0 0,1 2.8,0 Z" fill="#057feb"/></g></svg>
<svg width="55" height="55" viewBox="0 0 55 55" style="left:799px;top:718px"><g transform="translate(0.3,0.0)">
<rect x="0" y="0" width="55" height="55" rx="7.5" fill="#6aa85e"/>
<rect x="7.30" y="48.2" width="2.7" height="5.8" rx="0.3" fill="#f7c414"/><rect x="8.30" y="34" width="0.7" height="14.2" fill="#a5cc98"/><rect x="7.80" y="32.6" width="1.7" height="2.3" rx="0.5" fill="#7d857d"/><rect x="7.80" y="5.2" width="1.7" height="3" rx="0.6" fill="#8c988a"/><rect x="11.89" y="48.2" width="2.7" height="5.8" rx="0.3" fill="#f7c414"/><rect x="12.89" y="34" width="0.7" height="14.2" fill="#a5cc98"/><rect x="12.39" y="32.6" width="1.7" height="2.3" rx="0.5" fill="#7d857d"/><rect x="12.39" y="5.2" width="1.7" height="3" rx="0.6" fill="#8c988a"/><rect x="16.48" y="48.2" width="2.7" height="5.8" rx="0.3" fill="#f7c414"/><rect x="17.48" y="34" width="0.7" height="14.2" fill="#a5cc98"/><rect x="16.98" y="32.6" width="1.7" height="2.3" rx="0.5" fill="#7d857d"/><rect x="16.98" y="5.2" width="1.7" height="3" rx="0.6" fill="#8c988a"/><rect x="21.07" y="48.2" width="2.7" height="5.8" rx="0.3" fill="#f7c414"/><rect x="22.07" y="34" width="0.7" height="14.2" fill="#a5cc98"/><rect x="21.57" y="32.6" width="1.7" height="2.3" rx="0.5" fill="#7d857d"/><rect x="21.57" y="5.2" width="1.7" height="3" rx="0.6" fill="#8c988a"/><rect x="25.66" y="48.2" width="2.7" height="5.8" rx="0.3" fill="#f7c414"/><rect x="26.66" y="34" width="0.7" height="14.2" fill="#a5cc98"/><rect x="26.16" y="32.6" width="1.7" height="2.3" rx="0.5" fill="#7d857d"/><rect x="26.16" y="5.2" width="1.7" height="3" rx="0.6" fill="#8c988a"/><rect x="30.25" y="48.2" width="2.7" height="5.8" rx="0.3" fill="#f7c414"/><rect x="31.25" y="34" width="0.7" height="14.2" fill="#a5cc98"/><rect x="30.75" y="32.6" width="1.7" height="2.3" rx="0.5" fill="#7d857d"/><rect x="30.75" y="5.2" width="1.7" height="3" rx="0.6" fill="#8c988a"/><rect x="34.84" y="48.2" width="2.7" height="5.8" rx="0.3" fill="#f7c414"/><rect x="35.84" y="34" width="0.7" height="14.2" fill="#a5cc98"/><rect x="35.34" y="32.6" width="1.7" height="2.3" rx="0.5" fill="#7d857d"/><rect x="35.34" y="5.2" width="1.7" height="3" rx="0.6" fill="#8c988a"/><rect x="39.43" y="48.2" width="2.7" height="5.8" rx="0.3" fill="#f7c414"/><rect x="40.43" y="34" width="0.7" height="14.2" fill="#a5cc98"/><rect x="39.93" y="32.6" width="1.7" height="2.3" rx="0.5" fill="#7d857d"/><rect x="39.93" y="5.2" width="1.7" height="3" rx="0.6" fill="#8c988a"/><rect x="44.02" y="48.2" width="2.7" height="5.8" rx="0.3" fill="#f7c414"/><rect x="45.02" y="34" width="0.7" height="14.2" fill="#a5cc98"/><rect x="44.52" y="32.6" width="1.7" height="2.3" rx="0.5" fill="#7d857d"/><rect x="44.52" y="5.2" width="1.7" height="3" rx="0.6" fill="#8c988a"/>
<rect x="4.7" y="7.8" width="45.6" height="25.2" rx="2.6" fill="#353b35"/>
<circle cx="4.4" cy="45.9" r="1.7" fill="#4a7a42"/><circle cx="50.3" cy="45.9" r="1.7" fill="#4a7a42"/>
</g></svg>
<div class="t b" style="left:881px;top:720px;line-height:16px;letter-spacing:-0.22px">Host Memory</div>
<div class="t " style="left:881px;top:742px;line-height:16px;"><span class="b" style="color:#0e9f0e">1.11</span><span style="color:#1aa51a;margin-left:2.3px;letter-spacing:0.3px">GB</span> <span style="color:#4a545e;margin-left:1.6px;font-size:13px">/</span> <span class="b" style="color:#6a7480;margin-left:3px">8</span><span style="color:#808a94;margin-left:2.4px;letter-spacing:0.3px">GB</span></div>
<svg width="381" height="6" viewBox="0 0 381 6" style="left:881px;top:762px"><rect x="0.2" y="0" width="380" height="5.7" rx="2.85" fill="#e4e6e9"/><path d="M3,0 H33 V5.7 H3 A2.85,2.85 0 0,1 3,0 Z" fill="#0e9f0e"/></svg>
<div class="a" style="left:431px;top:293px;width:458px;height:300px;background:#fff;border-radius:3px;box-shadow:0 4px 13px 1px rgba(0,0,0,0.55)"></div>
<div class="t b" style="left:449.3px;top:304px;line-height:15px;font-size:11px;letter-spacing:-0.1px">Shared Links</div>
<svg width="10" height="10" viewBox="0 0 10 10" style="left:858px;top:306px"><g transform="translate(0.0,0.5)"><path d="M1.1,1.1 L8.9,8.9 M8.9,1.1 L1.1,8.9" stroke="#737c86" stroke-width="1.8" fill="none"/></g></svg>
<div class="a hl" style="left:431px;top:329px;width:458px;background:#ecf0f5"></div>
<div class="a" style="left:449px;top:344px;width:111px;height:26px;border-radius:3px;background:#e9eef3"><div class="t" style="left:12.800000000000011px;top:6px">Validity period</div></div>
<div class="a" style="left:565.5px;top:344px;width:103.5px;height:26px;border-radius:3px;background:#e9eef3"><div class="t" style="left:12.799999999999955px;top:6px">Get QR Code</div></div>
<div class="t lnk" style="left:456.3px;top:390px;line-height:16px;letter-spacing:-0.03px">http<span class="p">://</span>demo<span class="q">.</span>synology<span class="q">.</span>me<span class="p">:</span>5000<span class="p">/</span>sharing<span class="p">/</span>jkhfkoPis</div>
<div class="a" style="left:457.3px;top:427.6px;width:16.3px;height:16.3px;border:1px solid #c6d7e9;border-radius:3px;background:#fff"></div>
<svg width="12" height="10" viewBox="0 0 12 10" style="left:459px;top:430px"><g transform="translate(0.4,0.6)"><path d="M1.2,5 L4.4,8.2 L10.8,1.4" fill="none" stroke="#057feb" stroke-width="1.9" stroke-linecap="round" stroke-linejoin="round"/></g></svg>
<div class="t lab" style="left:482.2px;top:428px;line-height:16px;">Enable secure sharing</div>
<div class="t lab" style="left:482.2px;top:460px;line-height:16px;">Password :</div>
<div class="a" style="left:626px;top:454px;width:237px;height:26px;border:1px solid #cfdcea;border-radius:4px;background:#fff"></div>
<div class="t lab" style="left:636px;top:460px;font-size:13px;line-height:17px;letter-spacing:-1.12px;-webkit-text-stroke:0.4px currentColor">••••••••</div>
<div class="t lab" style="left:456.3px;top:506px;line-height:16px;letter-spacing:0.03px">Send link via <span class="lnk">the Default Email</span> or <span class="lnk">Mail</span></div>
<div class="a hl" style="left:431px;top:549px;width:458px;background:#ecf0f5"></div>
<div class="a" style="left:661px;top:558.5px;width:89px;height:25.5px;border-radius:13px;background:#e9eef3"><div class="t" style="left:0;width:89px;text-align:center;top:5.5px">Cancel</div></div>
<div class="a" style="left:757px;top:558.5px;width:110px;height:25.5px;border-radius:13px;background:#057feb"><div class="t" style="left:0;width:110px;text-align:center;top:5.5px;color:#fff">Save</div></div>
</div>
</body>
</html>
